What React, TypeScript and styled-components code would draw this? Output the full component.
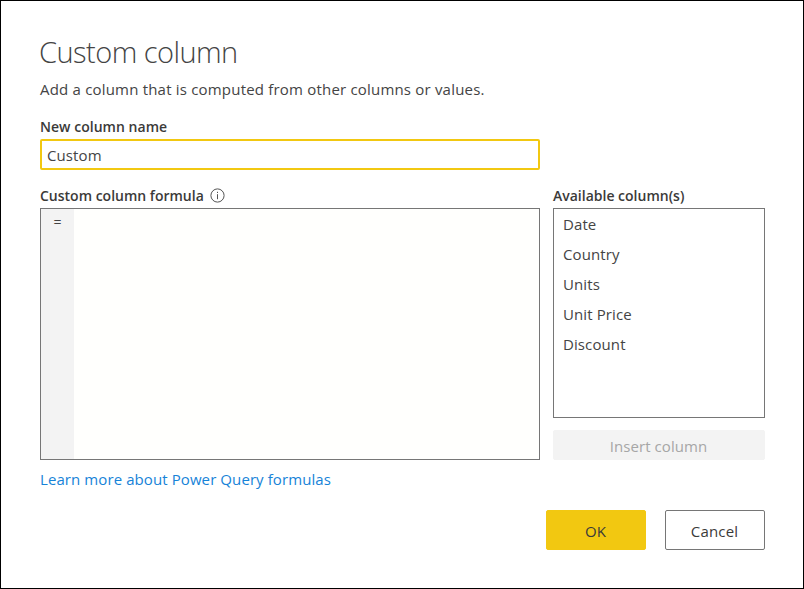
import React from "react";
import styled, { createGlobalStyle } from "styled-components";

const GlobalStyle = createGlobalStyle`
  * { box-sizing: border-box; }
  body { margin: 0; background: #fff; }
  button, input { font: inherit; color: inherit; }
`;

const Dialog = styled.main`
  width: 804px;
  height: 589px;
  border: 1px solid #000;
  padding: 31px 38px 38px 39px;
  background: #fff;
  color: #444;
  font: 400 15px/20px "Open Sans", "Noto Sans", sans-serif;
  display: flex;
  flex-direction: column;
  overflow: hidden;
`;

const Title = styled.h1`
  margin: 0 0 7px -1px;
  font-size: 29px;
  font-weight: 300;
  line-height: 40px;
  white-space: nowrap;
`;

const Tracked = styled.span<{ $track?: number }>`
  letter-spacing: ${({ $track = 0 }) => $track}px;
  white-space: nowrap;
`;

const Description = styled.p`
  margin: 0 0 17px;
`;

const Label = styled.label`
  display: flex;
  align-items: center;
  height: 20px;
  padding-top: 2px;
  margin-bottom: 3px;
  color: #3b3a39;
  font-size: 14px;
  font-weight: 600;
`;

const NameInput = styled.input`
  width: 500px;
  height: 31px;
  padding: 1px 5px 0;
  border: 2px solid #f2c811;
  border-radius: 2px;
  outline: none;
  background: #fff;
  letter-spacing: 0.1px;
`;

const Columns = styled.div`
  display: grid;
  grid-template-columns: 500px 212px;
  column-gap: 13px;
  margin-top: 15px;
`;

const Column = styled.section`
  display: flex;
  flex-direction: column;
`;

const InfoIcon = styled.svg`
  width: 15px;
  height: 15px;
  margin: 0 0 2px 6px;
`;

const Editor = styled.div`
  display: flex;
  height: 252px;
  border: 1px solid #767676;
  background: #fffffd;
`;

const Gutter = styled.div`
  width: 33px;
  padding-top: 3px;
  background: #f3f3f3;
  text-align: center;
  font-size: 14px;
`;

const ColumnList = styled.ul`
  height: 210px;
  margin: 0 0 12px;
  padding: 0 9px;
  border: 1px solid #767676;
  list-style: none;
`;

const ColumnItem = styled.li`
  height: 30px;
  line-height: 30px;
`;

const Button = styled.button<{ $kind: "primary" | "secondary" | "disabled" }>`
  width: ${({ $kind }) => ($kind === "disabled" ? "212px" : "100px")};
  height: ${({ $kind }) => ($kind === "disabled" ? "30px" : "40px")};
  padding: 2px 1px 0 0;
  border: 1px solid
    ${({ $kind }) => ({ primary: "#f2c811", secondary: "#767676", disabled: "#f3f3f3" })[$kind]};
  border-radius: 2px;
  background: ${({ $kind }) => ({ primary: "#f2c811", secondary: "#fff", disabled: "#f3f3f3" })[$kind]};
  color: ${({ $kind }) => ($kind === "disabled" ? "#a6a6a6" : "#3b3a39")};
`;

const Link = styled.a`
  align-self: flex-start;
  margin-top: 9px;
  color: #1683d8;
  text-decoration: none;
`;

const Footer = styled.footer`
  display: flex;
  justify-content: flex-end;
  gap: 19px;
  margin-top: auto;
`;

const columns = ["Date", "Country", "Units", "Unit Price", "Discount"];

export default function App() {
  return (
    <>
      <GlobalStyle />
      <Dialog>
        <Title><Tracked $track={-0.54}>Custom column</Tracked></Title>
        <Description>
          <Tracked $track={0.195}>Add a column that is computed from other columns or values.</Tracked>
        </Description>
        <Label htmlFor="name"><Tracked $track={0.03}>New column name</Tracked></Label>
        <NameInput id="name" defaultValue="Custom" />
        <Columns>
          <Column>
            <Label as="div">
              <Tracked>Custom column formula</Tracked>
              <InfoIcon viewBox="0 0 15 15" fill="none" stroke="#555">
                <circle cx="7.5" cy="7.5" r="6.6" />
                <path d="M7.5 6.2v5M7.5 3.8v1.2" />
              </InfoIcon>
            </Label>
            <Editor><Gutter>=</Gutter></Editor>
            <Link href="#"><Tracked $track={0.09}>Learn more about Power Query formulas</Tracked></Link>
          </Column>
          <Column>
            <Label as="div"><Tracked>Available column(s)</Tracked></Label>
            <ColumnList>
              {columns.map((name) => (
                <ColumnItem key={name}><Tracked $track={0.1}>{name}</Tracked></ColumnItem>
              ))}
            </ColumnList>
            <Button $kind="disabled" disabled><Tracked $track={0.08}>Insert column</Tracked></Button>
          </Column>
        </Columns>
        <Footer>
          <Button $kind="primary"><Tracked>OK</Tracked></Button>
          <Button $kind="secondary"><Tracked $track={0.15}>Cancel</Tracked></Button>
        </Footer>
      </Dialog>
    </>
  );
}
